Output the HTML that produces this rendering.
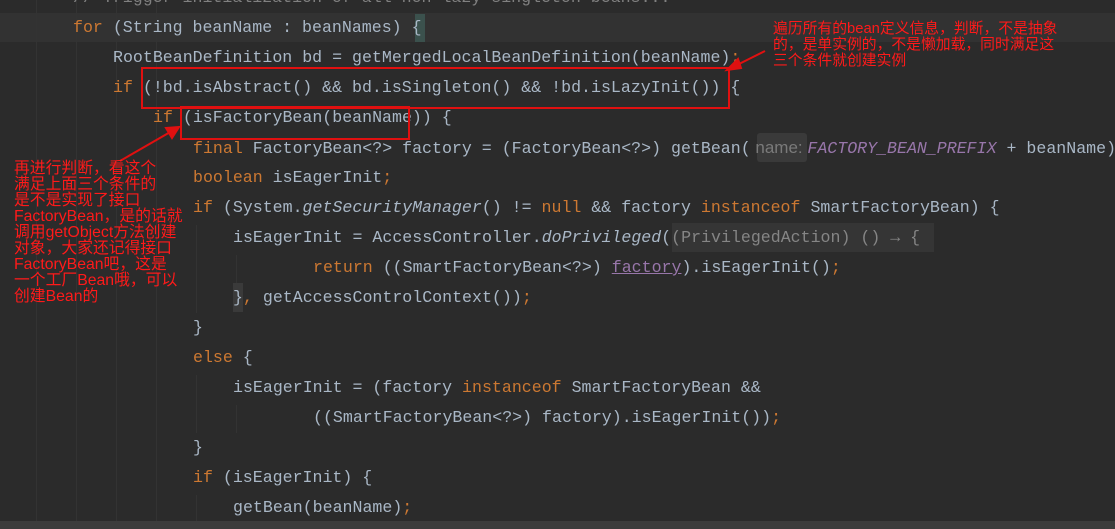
<!DOCTYPE html>
<html><head><meta charset="utf-8"><style>
body{margin:0;width:1115px;height:529px;background:#2b2b2b;overflow:hidden;position:relative;font-family:"Liberation Mono",monospace;}
.l{position:absolute;left:0;height:30px;line-height:30px;font-size:16.6px;color:#a9b7c6;white-space:pre;}
.k{color:#cc7832}.i{font-style:italic}.c{color:#808080}.p{color:#9876aa;font-style:italic}
.cur{position:absolute;left:0;top:13px;width:1115px;height:29px;background:#323232}
.box{position:absolute;border:2px solid #e01010}
.ann{position:absolute;color:#ff1a1a;font-family:"Liberation Sans","Noto Sans CJK SC",sans-serif;font-size:14.5px;line-height:16px;}
.g{position:absolute;width:1px;background:#333}
</style></head><body>
<div class="cur"></div>
<div class="g" style="left:36px;top:0;height:529px"></div>
<div class="g" style="left:76px;top:0;height:529px"></div>
<div class="g" style="left:116px;top:0;height:529px"></div>
<div class="g" style="left:156px;top:0;height:529px"></div>
<div class="g" style="left:196px;top:225px;height:88px"></div>
<div class="g" style="left:236px;top:255px;height:28px"></div>
<div class="g" style="left:196px;top:375px;height:58px"></div>
<div class="g" style="left:236px;top:405px;height:28px"></div>
<div class="g" style="left:196px;top:495px;height:30px"></div>
<div style="position:absolute;left:415px;top:14px;width:10px;height:28px;background:#3b514d"></div>
<div style="position:absolute;left:757px;top:133px;width:50px;height:29px;background:#3a3a3a;border-radius:3px"></div>
<div style="position:absolute;left:672px;top:223px;width:262px;height:29px;background:#353535"></div>
<div style="position:absolute;left:233px;top:283px;width:10px;height:29px;background:#3a3a3a"></div>
<div style="position:absolute;left:0;top:521px;width:1115px;height:8px;background:#3c3c3c"></div>

<div class="l c" style="top:-17px;left:73px">// Trigger initialization of all non-lazy singleton beans...</div>
<div class="l" style="top:13px;left:73px"><span class="k">for</span> (String beanName : beanNames) {</div>
<div class="l" style="top:43px;left:113px">RootBeanDefinition bd = getMergedLocalBeanDefinition(beanName)<span class="k">;</span></div>
<div class="l" style="top:73px;left:113px"><span class="k">if</span> (!bd.isAbstract() &amp;&amp; bd.isSingleton() &amp;&amp; !bd.isLazyInit()) {</div>
<div class="l" style="top:103px;left:153px"><span class="k">if</span> (isFactoryBean(beanName)) {</div>
<div class="l" style="top:133px;left:193px"><span class="k">final</span> FactoryBean&lt;?&gt; factory = (FactoryBean&lt;?&gt;) getBean(<span style="font-family:'Liberation Sans',sans-serif;color:#7a7a7a;font-size:17px"> name: </span><span class="p">FACTORY_BEAN_PREFIX</span> + beanName)<span class="k">;</span></div>
<div class="l" style="top:163px;left:193px"><span class="k">boolean</span> isEagerInit<span class="k">;</span></div>
<div class="l" style="top:193px;left:193px"><span class="k">if</span> (System.<span class="i">getSecurityManager</span>() != <span class="k">null</span> &amp;&amp; factory <span class="k">instanceof</span> SmartFactoryBean) {</div>
<div class="l" style="top:223px;left:233px">isEagerInit = AccessController.<span class="i">doPrivileged</span>(<span style="color:#858585">(PrivilegedAction) () → {</span></div>
<div class="l" style="top:253px;left:313px"><span class="k">return</span> ((SmartFactoryBean&lt;?&gt;) <span style="color:#9876aa;text-decoration:underline">factory</span>).isEagerInit()<span class="k">;</span></div>
<div class="l" style="top:283px;left:233px">}<span class="k">,</span> getAccessControlContext())<span class="k">;</span></div>
<div class="l" style="top:313px;left:193px">}</div>
<div class="l" style="top:343px;left:193px"><span class="k">else</span> {</div>
<div class="l" style="top:373px;left:233px">isEagerInit = (factory <span class="k">instanceof</span> SmartFactoryBean &amp;&amp;</div>
<div class="l" style="top:403px;left:313px">((SmartFactoryBean&lt;?&gt;) factory).isEagerInit())<span class="k">;</span></div>
<div class="l" style="top:433px;left:193px">}</div>
<div class="l" style="top:463px;left:193px"><span class="k">if</span> (isEagerInit) {</div>
<div class="l" style="top:493px;left:233px">getBean(beanName)<span class="k">;</span></div>

<div class="box" style="left:141px;top:67px;width:585px;height:38px"></div>
<div class="box" style="left:180px;top:106px;width:226px;height:30px"></div>
<svg style="position:absolute;left:0;top:0" width="1115" height="529">
<g stroke="#e01010" stroke-width="2" fill="#e01010">
<line x1="765" y1="51" x2="735" y2="66"/><polygon points="727,70 738,59 741,68"/>
<line x1="120" y1="161" x2="172" y2="131"/><polygon points="179,127 166,128 172,138"/>
</g></svg>
<div class="ann" style="left:773px;top:21px;width:330px;font-size:14.8px">遍历所有的bean定义信息，判断，不是抽象<br>的，是单实例的，不是懒加载，同时满足这<br>三个条件就创建实例</div>
<div class="ann" style="left:14px;top:161px;width:190px;font-size:15.8px">再进行判断，看这个<br>满足上面三个条件的<br>是不是实现了接口<br>FactoryBean，是的话就<br>调用getObject方法创建<br>对象，大家还记得接口<br>FactoryBean吧，这是<br>一个工厂Bean哦，可以<br>创建Bean的</div>
</body></html>
